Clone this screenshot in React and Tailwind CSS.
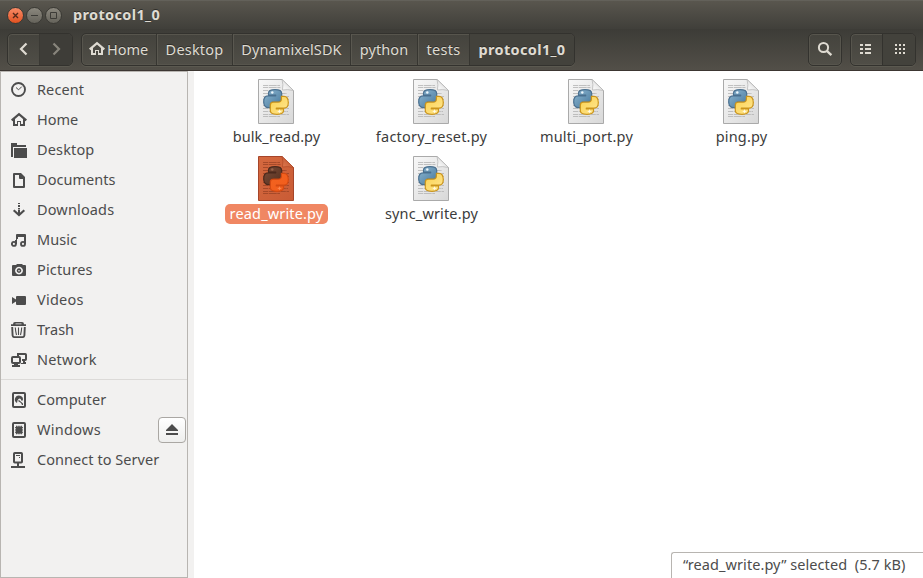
import React from "react";

const SNAKE =
  "M5.500 4.200C5.500 1.600 8.300.7 12 .7c4.100 0 6.700 1 6.700 3.800V9.800Q18.700 12.800 15.600 12.800H11Q7.600 12.800 7.600 16.300V18.600H5C2 18.600.7 16 .7 12.600.7 9 2 6.800 5 6.800H12.700V6H5.500z";

const SidebarSvg = ({ children }) => (
  <svg width="17" height="16" viewBox="0 0 17 16" className="shrink-0" fill="#4c4c4c" stroke="none">
    {children}
  </svg>
);

const HomeShape = ({ color }) => (
  <>
    <path d="M.7 8.300 8 2.200l7.300 6.100" fill="none" stroke={color} strokeWidth="2.200" />
    <path d="M2 7h2v7H2zM12 7h2v7h-2zM2 12h5v2H2zM9 12h5v2H9zM6 9h4v1H6zM6 9h1v5H6zM9 9h1v5H9z" fill={color} />
  </>
);

const ICONS = {
  recent: (
    <>
      <circle cx="7.500" cy="7.500" r="6.500" fill="none" stroke="#4c4c4c" strokeWidth="1.900" />
      <path d="M5 5.500l2.600 2.300 3.200-3.200" fill="none" stroke="#4c4c4c" strokeWidth="1" />
    </>
  ),
  home: <HomeShape color="#4c4c4c" />,
  desktop: <path d="M0 1h6v2h9v2H2v10H0zM3 6h13v10H3z" />,
  documents: (
    <path fillRule="evenodd" d="M3 1h7l4 4v10q0 1-1 1H3q-1 0-1-1V2q0-1 1-1zM4 3v11h8V7H9q-1 0-1-1V3z" />
  ),
  downloads: (
    <>
      <path d="M7 1h2v1H7zM7 3h2v2H7zM7 6h2v1.500H7zM7 8h2v5H7z" />
      <path d="M2.700 8.300 8 13l5.300-4.700" fill="none" stroke="#4c4c4c" strokeWidth="2.200" />
    </>
  ),
  music: (
    <>
      <circle cx="2.900" cy="11.900" r="2" fill="none" stroke="#4c4c4c" strokeWidth="1.900" />
      <circle cx="12" cy="11.900" r="2" fill="none" stroke="#4c4c4c" strokeWidth="1.900" />
      <path d="M5 3q0-1 1-1h8q1 0 1 1v9h-2V5H7v2H6v5H4V8h1z" />
    </>
  ),
  pictures: (
    <>
      <path fillRule="evenodd" d="M5 3l1-1h5l1 1h2q1 0 1 1v9q0 1-1 1H2q-1 0-1-1V4q0-1 1-1zM8 4.700a3.900 3.900 0 1 0 .01 0z" />
      <path fillRule="evenodd" d="M8 6.300a2.300 2.300 0 1 0 .01 0zM8 7.900a.7.7 0 1 1-.01 0z" />
    </>
  ),
  videos: <path d="M1 5l4 2.500V5q0-1 1-1h8q1 0 1 1v7q0 1-1 1H6q-1 0-1-1V9.500L1 12z" />,
  trash: (
    <>
      <path d="M2 2.200Q2 0 4 0h7q2 0 2 2.200h2V4H0V2.200zM4.500 1.500v.8h6v-.8z" fillRule="evenodd" />
      <path d="M1.200 5l.4 8.500Q1.800 15.100 3.500 15.100h8q1.700 0 1.900-1.600L13.800 5" fill="none" stroke="#4c4c4c" strokeWidth="1.900" />
      <path d="M4.300 5.500q.2 4 1.200 7.500M7.500 5.500v7.500M10.700 5.500q-.2 4-1.200 7.500" fill="none" stroke="#4c4c4c" strokeWidth="1.100" />
    </>
  ),
  network: (
    <>
      <path d="M7 2V1.900h7.200q.8 0 .8.800V7.300q0 .7-.8.700H11" fill="none" stroke="#4c4c4c" strokeWidth="2" />
      <path d="M6 1h2v3H6zM12 8h2v2h1v2h-5v-1h2z" />
      <rect x="1" y="5" width="8" height="6" rx="1" fill="#f2f1f0" stroke="#4c4c4c" strokeWidth="2" />
      <path d="M3 12h4v1h2v2H1v-2h2z" />
    </>
  ),
  computer: (
    <>
      <rect x="2" y="1" width="12" height="14" rx="1" fill="none" stroke="#4c4c4c" strokeWidth="2" />
      <path d="M6 11A4 4 0 1 1 11.800 8.500L10 8.500A1.500 1.500 0 0 0 7.500 7L6.500 8.500zM8 8l4 3.500V13h-1L10 11 7 9z" />
    </>
  ),
  windows: (
    <>
      <rect x="2" y="1" width="12" height="14" rx="1" fill="none" stroke="#4c4c4c" strokeWidth="2" />
      <rect x="5" y="4.500" width="6" height="7" />
      <path d="M5.500 3.700v8.600M7.200 3.700v8.600M8.900 3.700v8.600M10.600 3.700v8.600M4 5.500h8M4 7.200h8M4 8.900h8M4 10.600h8" stroke="#4c4c4c" strokeWidth=".9" />
    </>
  ),
  server: (
    <>
      <rect x="3" y="1" width="8" height="9.500" rx=".8" fill="none" stroke="#4c4c4c" strokeWidth="2" />
      <path d="M5 3h4v1H5zM8 5h1v1H8zM6 11h2v3H6zM0 14h14v2H0z" />
    </>
  ),
};

function PythonFile({ selected }) {
  const id = selected ? "sel" : "std";
  const line = selected ? "#9c4426" : "#b4b4b4";
  return (
    <svg width="38" height="47" viewBox="0 0 38 47" className="block shrink-0">
      <defs>
        <linearGradient id={"page" + id} x1="0" y1="0" x2="1" y2="1">
          <stop offset="0" stopColor={selected ? "#d5693f" : "#f8f8f8"} />
          <stop offset="1" stopColor={selected ? "#c95b35" : "#d8d8d8"} />
        </linearGradient>
        <linearGradient id={"blue" + id} x1="0" y1="0" x2="1" y2="1">
          <stop offset="0" stopColor={selected ? "#7a4c38" : "#8fb8d2"} />
          <stop offset="1" stopColor={selected ? "#55301f" : "#45779c"} />
        </linearGradient>
        <linearGradient id={"gold" + id} x1="1" y1="1" x2="0" y2="0">
          <stop offset="0" stopColor={selected ? "#f36420" : "#fbd14c"} />
          <stop offset="1" stopColor={selected ? "#f25c1c" : "#ffe795"} />
        </linearGradient>
        <linearGradient id={"fold" + id} x1="0" y1="1" x2="1" y2="0">
          <stop offset="0" stopColor={selected ? "#e07a50" : "#ffffff"} />
          <stop offset="1" stopColor={selected ? "#b64c2a" : "#d0d0d0"} />
        </linearGradient>
      </defs>
      <path
        d="M1.500 1.500H25L36.500 12.500V45.500H1.500z"
        fill={"url(#page" + id + ")"}
        stroke={selected ? "#a6452a" : "#aaaaaa"}
      />
      <path
        d="M6 7.500h17M6 9.500h18M6 12.500h18M6 15.500h24M6 18.500h26M6 21.500h26M6 24.500h26M6 27.500h26M6 30.500h26M6 33.500h25M6 36.500h26M6 38.500h17"
        stroke={line}
        strokeWidth="1"
        strokeDasharray="5 .7 8 .6 3 .5"
        opacity=".8"
      />
      <path d="M25 1.500q1.500 5 .5 10.500 5-1 11 .5z" fill={"url(#fold" + id + ")"} stroke={selected ? "#b44c2b" : "#b8b8b8"} strokeWidth=".8" />
      <g transform="translate(6 11)" strokeWidth="1.200" strokeLinejoin="round">
        <path d={SNAKE} fill={"url(#blue" + id + ")"} stroke={selected ? "#4b291c" : "#4a7090"} />
        <path
          d={SNAKE}
          transform="rotate(180 13 13)"
          fill={"url(#gold" + id + ")"}
          stroke={selected ? "#d44a12" : "#cb951c"}
        />
        <circle cx="9.300" cy="3.500" r="1.200" fill={selected ? "#96634c" : "#eef7fc"} />
        <path d="M16.500 20l.6 1.700 1.700.6-1.700.6-.6 1.700-.6-1.700-1.700-.6 1.700-.6z" fill={selected ? "#ff8852" : "#fffbe8"} />
      </g>
    </svg>
  );
}

const places = [
  ["recent", "Recent", "tracking-[0.1px]"],
  ["home", "Home", "tracking-[0px]"],
  ["desktop", "Desktop", "tracking-[0.15px]"],
  ["documents", "Documents", "tracking-[0.05px]"],
  ["downloads", "Downloads", "tracking-[0.15px]"],
  ["music", "Music", "tracking-[0.05px]"],
  ["pictures", "Pictures", "tracking-[0.15px]"],
  ["videos", "Videos", "tracking-[0.25px]"],
  ["trash", "Trash", "tracking-[0px]"],
  ["network", "Network", "tracking-[0.2px]"],
];

const devices = [
  ["computer", "Computer", "tracking-[0.05px]"],
  ["windows", "Windows", "tracking-[0.3px]"],
  ["server", "Connect to Server", "tracking-[0.05px]"],
];

const files = [
  ["bulk_read.py", "tracking-[0.08px]"],
  ["factory_reset.py", "tracking-[0.2px]"],
  ["multi_port.py", "tracking-[0.2px]"],
  ["ping.py", "tracking-[0.15px]"],
  ["read_write.py", "tracking-[0.15px]"],
  ["sync_write.py", "tracking-[0.15px]"],
];

const crumbs = [
  ["Desktop", "w-[76px]", "tracking-[0.2px]"],
  ["DynamixelSDK", "w-[118px]", "tracking-[0.1px]"],
  ["python", "w-[67px]", "tracking-[0.1px]"],
  ["tests", "w-[52px]", "tracking-[0.25px]"],
];

const BOX =
  "flex h-[33px] rounded-[5px] border border-[#33322e] bg-gradient-to-b from-[#44433d] to-[#504e47] shadow-[inset_0_0_0_1px_#57554d,0_1px_0_#5b5950]";

function PlaceRow({ item }) {
  const [icon, label, tracking] = item;
  return (
    <div className="flex h-[30px] items-center pl-[10px]">
      <SidebarSvg>{ICONS[icon]}</SidebarSvg>
      <span className={"ml-[9px] whitespace-nowrap pb-[2px] " + tracking}>{label}</span>
      {icon === "windows" && (
        <button className="mr-px ml-auto flex h-[26px] w-[28px] items-center justify-center rounded-[4px] border border-[#aaa7a3] bg-gradient-to-b from-white to-[#eeeeed]">
          <svg width="14" height="12" viewBox="0 0 14 12" fill="#4c4c4c">
            <path d="M7 0l6 6v1H1V6zM1 9h12v2H1z" />
          </svg>
        </button>
      )}
    </div>
  );
}

function WindowButton({ kind }) {
  const close = kind === "close";
  return (
    <div
      className={
        "flex size-[17px] items-center justify-center rounded-full border border-[#3a3934] bg-gradient-to-b " +
        (close ? "from-[#f78a65] to-[#e2511d]" : "from-[#8b887e] to-[#65635b]")
      }
    >
      <svg width="7" height="7" viewBox="0 0 7 7" fill="none" stroke={close ? "#54291a" : "#3c3b37"} strokeWidth={close ? 1.4 : 1}>
        {close && <path d="M1 1l5 5M6 1l-5 5" />}
        {kind === "min" && <path d="M0 3.500h7" />}
        {kind === "max" && <path d="M.5.5h6v6h-6z" />}
      </svg>
    </div>
  );
}

export default function App() {
  return (
    <div className="flex h-[578px] w-[923px] flex-col overflow-hidden bg-[#3c3b37] font-['Noto_Sans','Open_Sans',sans-serif] text-[14.500px] leading-5 text-[#4c4c4c]">
      <header className="h-[71px] shrink-0 border-b border-[#3c3632] text-[#dfdbd2] [text-shadow:0_-1px_0_#2f2e2a]">
        <div className="flex h-[29px] items-center gap-[2px] border-t border-[#63615a] bg-gradient-to-b from-[#59564e] to-[#403f3a] pl-[7px]">
          <WindowButton kind="close" />
          <WindowButton kind="min" />
          <WindowButton kind="max" />
          <h1 className="ml-[9px] pb-[2px] font-bold tracking-[0.35px]">protocol1_0</h1>
        </div>
        <div className="flex h-[41px] items-start bg-gradient-to-b from-[#3d3c37] to-[#524f48] pr-[7px] pl-[7px] pt-[4px]">
          <div className={BOX + " w-[66px]"}>
            <div className="flex w-8 items-center justify-center border-r border-[#3a3934]">
              <svg width="10" height="14" viewBox="0 0 10 14" fill="none" stroke="#dfdbd2" strokeWidth="2.200" className="mb-[2px]">
                <path d="M7.500 1.500L2 7 7.500 12.500" />
              </svg>
            </div>
            <div className="flex flex-1 items-center justify-center rounded-r-[4px] bg-[#3e3d38]">
              <svg width="10" height="14" viewBox="0 0 10 14" fill="none" stroke="#88857c" strokeWidth="2.200" className="mb-[2px]">
                <path d="M2.500 1.500L8 7 2.500 12.500" />
              </svg>
            </div>
          </div>
          <nav className={BOX + " ml-2"}>
            <div className="flex w-[75px] items-center border-r border-[#373631] pl-[7px]">
              <svg width="16" height="16" viewBox="0 0 16 16" className="mb-[2px]">
                <HomeShape color="#dfdbd2" />
              </svg>
              <span className="ml-[2px] whitespace-nowrap pb-px tracking-[0px]">Home</span>
            </div>
            {crumbs.map(([name, width, tracking]) => (
              <div
                key={name}
                className={"flex items-center justify-center whitespace-nowrap border-r border-r-[#373631] pb-[2px] shadow-[inset_1px_0_0_#5a5850] " + width + " " + tracking}
              >
                {name}
              </div>
            ))}
            <div className="flex w-[104px] items-center justify-center rounded-r-[4px] bg-[#43423c] pb-[2px] font-bold tracking-[0.35px]">
              protocol1_0
            </div>
          </nav>
          <div className={BOX + " ml-auto w-[34px] items-center justify-center"}>
            <svg width="16" height="16" viewBox="0 0 16 16" fill="none" stroke="#dfdbd2" strokeWidth="2" className="mb-px">
              <circle cx="6.500" cy="6.500" r="4.600" />
              <path d="M9.800 9.800l4.600 4.400" strokeWidth="2.300" />
            </svg>
          </div>
          <div className={BOX + " ml-2 w-[66px]"}>
            <div className="flex w-8 items-center justify-center border-r border-[#33322e] pb-px">
              <svg width="12" height="10" viewBox="0 0 12 10" fill="#dfdbd2" className="mr-[2px]">
                <path d="M0 0h3v2H0zM5 0h6v2H5zM0 4h3v2H0zM5 4h6v2H5zM0 8h3v2H0zM5 8h6v2H5z" />
              </svg>
            </div>
            <div className="flex flex-1 items-center justify-center rounded-r-[4px] bg-[#43423c] pb-px pl-[2px]">
              <svg width="10" height="10" viewBox="0 0 10 10" fill="#dfdbd2">
                <path d="M0 0h2v2H0zM4 0h2v2H4zM8 0h2v2H8zM0 4h2v2H0zM4 4h2v2H4zM8 4h2v2H8zM0 8h2v2H0zM4 8h2v2H4zM8 8h2v2H8z" />
              </svg>
            </div>
          </div>
        </div>
      </header>
      <div className="flex min-h-0 flex-1">
        <aside className="w-[188px] shrink-0 border border-[#b8b5b1] bg-[#f2f1f0] pt-[3px]">
          {places.map((item) => (
            <PlaceRow key={item[1]} item={item} />
          ))}
          <div className="mt-[4px] mb-[5px] h-[1px] bg-[#dcdad8]" />
          {devices.map((item) => (
            <PlaceRow key={item[1]} item={item} />
          ))}
        </aside>
        <div className="w-[6px] shrink-0 bg-[#f2f1f0]" />
        <main className="relative flex-1 bg-white">
          <div className="grid auto-rows-[77px] grid-cols-[repeat(4,155px)] pt-[7px] pl-[5px] text-[#3c3c3c]">
            {files.map(([name, tracking]) => {
              const selected = name === "read_write.py";
              return (
                <div key={name} className="flex flex-col items-center">
                  <div className="pr-[2px]">
                    <PythonFile selected={selected} />
                  </div>
                  <span
                    className={
                      "mt-[2px] flex h-5 items-center whitespace-nowrap rounded-[5px] px-[5px] pb-[2px] " +
                      tracking +
                      (selected ? " bg-[#f08763] text-white" : "")
                    }
                  >
                    {name}
                  </span>
                </div>
              );
            })}
          </div>
          <div className="absolute right-0 bottom-0 flex h-[26px] w-[252px] items-center whitespace-pre rounded-tl-[3px] border-t border-l border-[#b8b5b1] bg-white pb-[3px] pl-[11px] tracking-[0.07px]">
            {"“read_write.py” selected  (5.7 kB)"}
          </div>
        </main>
      </div>
    </div>
  );
}
